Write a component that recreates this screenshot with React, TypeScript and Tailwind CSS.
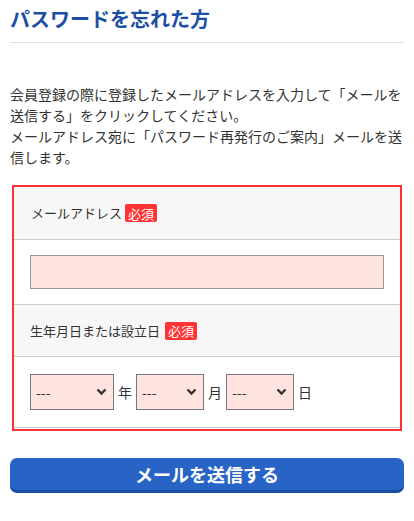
const font = { fontFamily: '"Noto Sans CJK JP", "Noto Sans", sans-serif' };

const Badge = () => (
  <span className="ml-[3px] inline-flex h-[18px] items-center rounded-[2px] bg-[#ff3333] px-[3px] text-[13px] leading-none text-white">
    必須
  </span>
);

const DateSelect = ({ width }: { width: string }) => (
  <div className={`relative h-[36px] ${width}`}>
    <select
      defaultValue=""
      className="h-full w-full appearance-none rounded-none border border-[#777] bg-[#ffe3de] pl-[5px] text-[14px] text-[#333] outline-none"
    >
      <option value="">---</option>
    </select>
    <svg
      className="pointer-events-none absolute right-[7px] top-[14px]"
      width="11"
      height="8"
      viewBox="0 0 11 8"
    >
      <path d="M1.5 1.5 L5.5 5.5 L9.5 1.5" fill="none" stroke="#333" strokeWidth="2.4" />
    </svg>
  </div>
);

export default function App() {
  return (
    <div className="min-h-[521px] bg-white px-[10px] text-[#333]" style={font}>
      <h1 className="border-b border-[#e0e0e0] pb-[8px] pt-[4px] text-[20px] font-bold leading-[30px] text-[#1e4ea4]">
        パスワードを忘れた方
      </h1>

      <p className="mt-[41px] text-[14px] leading-[21px]">
        会員登録の際に登録したメールアドレスを入力して「メールを送信する」をクリックしてください。
        <br />
        メールアドレス宛に「パスワード再発行のご案内」メールを送信します。
      </p>

      <div className="mx-[2px] mt-[17px] border-2 border-[#ff3333] pb-[1px]">
        <div className="flex h-[53px] items-center border-b border-[#ccc] bg-[#f7f7f7] pl-[17px] text-[13px]">
          メールアドレス
          <Badge />
        </div>
        <div className="border-b border-[#ccc] px-[16px] py-[15px]">
          <input
            type="email"
            className="block h-[34px] w-full border border-[#999] bg-[#ffe3de] px-2 text-[14px] outline-none"
          />
        </div>
        <div className="flex h-[52px] items-center border-b border-[#ccc] bg-[#f7f7f7] pl-[16px] text-[13px]">
          生年月日または設立日
          <span className="ml-[2px]" />
          <Badge />
        </div>
        <div className="flex items-center gap-[4px] border-b border-[#ccc] px-[16px] py-[17px] text-[14px]">
          <DateSelect width="w-[84px]" />
          <span>年</span>
          <DateSelect width="w-[68px]" />
          <span>月</span>
          <DateSelect width="w-[68px]" />
          <span>日</span>
        </div>
      </div>

      <button className="mt-[27px] h-[32px] w-full rounded-[7px] bg-[#2864c6] text-[18px] font-bold text-white shadow-[0_3px_0_#1b4ea3]">
        メールを送信する
      </button>
    </div>
  );
}
